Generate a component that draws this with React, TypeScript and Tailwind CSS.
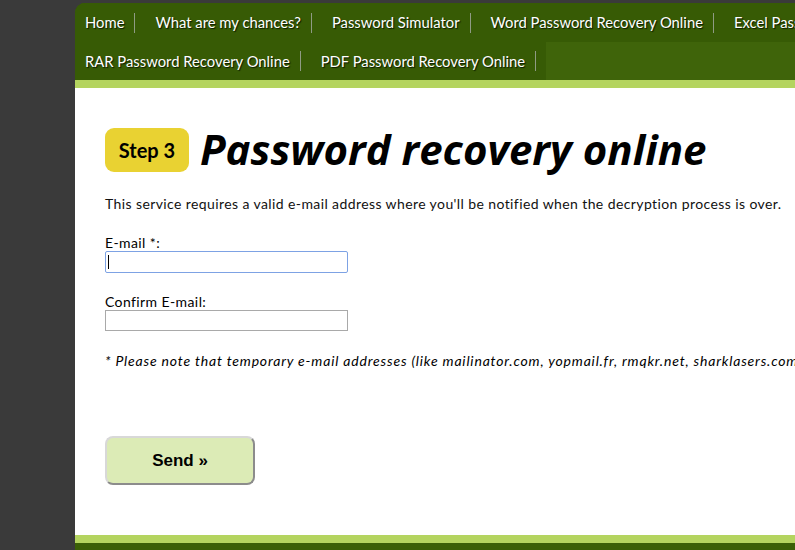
const navRow1 = ['Home', 'What are my chances?', 'Password Simulator', 'Word Password Recovery Online', 'Excel Password Recovery Online'];
const navRow2 = ['RAR Password Recovery Online', 'PDF Password Recovery Online'];

function NavItem({ label }: { label: string }) {
  return (
    <li className="flex items-center bg-[#375b05] shrink-0 pl-[10px]">
      <a className="text-white text-[14.8px] whitespace-nowrap [text-shadow:1px_1px_1px_#0b1a00]">{label}</a>
      <span className="ml-[10px] w-px h-[20px] bg-[#8f9b84]" />
      <span className="w-[10px]" />
    </li>
  );
}

export default function App() {
  return (
    <div className="w-[795px] h-[550px] overflow-hidden bg-[#3a3a3a] flex font-['Lato',sans-serif]">
      <div className="w-[75px] shrink-0" />
      <div className="w-[1000px] shrink-0 mt-[3px] flex flex-col">
        {/* top menu */}
        <nav className="bg-[#3f640a] rounded-tl-[10px] overflow-hidden">
          <ul className="flex h-[39px] bg-[#375b05]">
            {navRow1.map((n) => (
              <NavItem key={n} label={n} />
            ))}
          </ul>
          <ul className="flex h-[38px]">
            {navRow2.map((n) => (
              <NavItem key={n} label={n} />
            ))}
          </ul>
        </nav>
        <div className="h-[8px] bg-[#b4d45f]" />

        {/* content */}
        <div className="bg-white h-[447px] pl-[30px] pt-[40px] text-black">
          <div className="flex items-center gap-[11px]">
            <span className="w-[84px] h-[44px] rounded-[9px] bg-[#e9d232] flex items-center justify-center text-[20px] font-bold">
              Step 3
            </span>
            <h1 className="font-['Open_Sans',sans-serif] text-[42px] font-bold italic leading-none -mt-[3px]">
              Password recovery online
            </h1>
          </div>
          <p className="mt-[21px] text-[14px] tracking-[0.4px] text-[#111]">
            This service requires a valid e-mail address where you'll be notified when the decryption process is over.
          </p>

          <label className="block mt-[20px] text-[14px] tracking-[0.4px] leading-[17px]">E-mail *:</label>
          <div className="relative w-[243px]">
            <input className="block w-[243px] h-[22px] border border-[#7da2e4] rounded-[2px] outline-none px-[2px] text-[13px]" />
            <span className="absolute left-[3px] top-[4px] w-px h-[14px] bg-black" />
          </div>
          <label className="block mt-[20px] text-[14px] tracking-[0.4px] leading-[17px]">Confirm E-mail:</label>
          <input className="block w-[243px] h-[21px] border border-[#a9a9a9] outline-none px-[2px] text-[13px]" />

          <p className="mt-[19px] text-[14px] tracking-[0.82px] italic whitespace-nowrap">
            * Please note that temporary e-mail addresses (like mailinator.com, yopmail.fr, rmqkr.net, sharklasers.com, etc.) are not accepted.
          </p>

          <button className="mt-[65px] w-[150px] h-[49px] rounded-[8px] bg-[#dcebb6] border-2 border-t-[#d8d8d8] border-l-[#d8d8d8] border-r-[#8c8c8c] border-b-[#8c8c8c] text-[17px] font-bold font-['Liberation_Sans',sans-serif]">
            Send »
          </button>
        </div>
        <div className="h-[8px] bg-[#b4d45f]" />
        <div className="flex-1 bg-[#3a5f06]" />
      </div>
    </div>
  );
}
